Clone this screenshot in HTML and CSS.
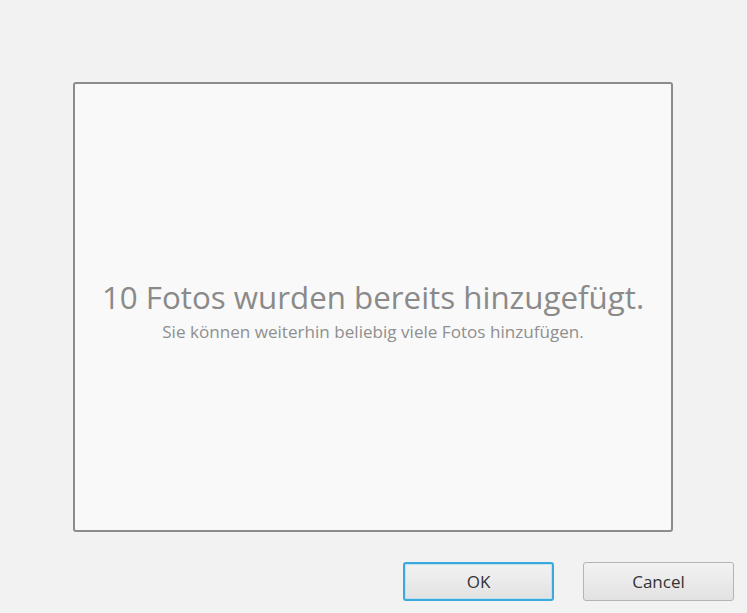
FILE: index.html
```html
<!DOCTYPE html>
<html lang="de">
<head>
<meta charset="utf-8">
<link rel="stylesheet" href="styles.css">
</head>
<body>
<div class="dialog">
  <div class="drop">
    <div class="title">10 Fotos wurden bereits hinzugefügt.</div>
    <div class="sub">Sie können weiterhin beliebig viele Fotos hinzufügen.</div>
  </div>
  <div class="actions">
    <button class="btn ok">OK</button>
    <button class="btn">Cancel</button>
  </div>
</div>
</body>
</html>
```
FILE: styles.css
```css
html, body {
  margin: 0;
  padding: 0;
  background: #f2f2f2;
  height: 100%;
  overflow: hidden;
}
body {
  font-family: "Open Sans", "Noto Sans", sans-serif;
}
.dialog {
  padding: 82px 0 0 73px;
}
.drop {
  box-sizing: border-box;
  width: 600px;
  height: 450px;
  border: 2px solid #8c8c8c;
  border-radius: 3px;
  background: #f9f9f9;
  display: flex;
  flex-direction: column;
  align-items: center;
  justify-content: center;
  padding-top: 6px;
}
.title {
  font-size: 31.3px;
  color: #8a8a8a;
  line-height: 40px;
}
.sub {
  font-size: 17.1px;
  color: #8f8f8f;
  line-height: 22px;
  margin-top: 4px;
}
.actions {
  display: flex;
  gap: 29px;
  margin-top: 30px;
  margin-left: 330px;
}
.btn {
  box-sizing: border-box;
  width: 151px;
  height: 39px;
  border: 1px solid #b4b4b4;
  border-radius: 3px;
  background: linear-gradient(#f2f2f2, #e2e2e2);
  font-family: "Open Sans", "Noto Sans", sans-serif;
  font-size: 17px;
  color: #333;
  padding: 0;
}
.btn.ok {
  border: 2px solid #3ba9dc;
  box-shadow: inset 0 0 0 1px #bfe2f2;
}
```
